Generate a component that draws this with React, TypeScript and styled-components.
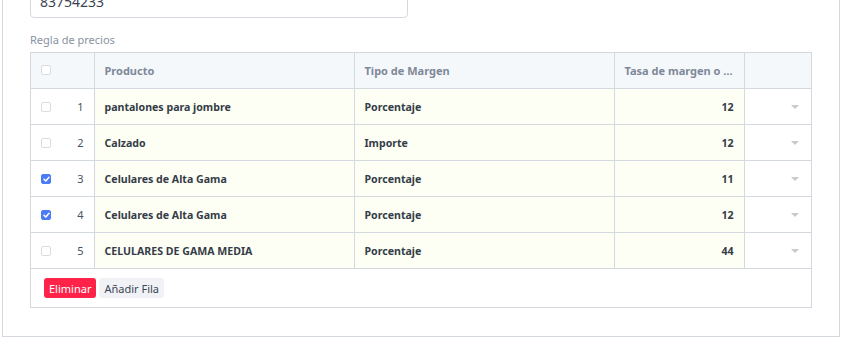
import styled, { createGlobalStyle } from 'styled-components';

const GlobalStyle = createGlobalStyle`
  html, body {
    margin: 0;
    padding: 0;
    background: #ffffff;
    overflow: hidden;
  }
  body {
    font-family: 'Noto Sans', 'Open Sans', sans-serif;
    color: #333d4b;
  }
`;

const colors = {
  border: '#d4d9e0',
  header: '#f5f8fb',
  editable: '#fefff4',
  muted: '#8892a2',
  headText: '#7f8899',
  text: '#343c48',
  danger: '#ff2249',
};

const Panel = styled.div`
  box-sizing: border-box;
  width: 838px;
  height: 353px;
  margin: -16px 0 0 2px;
  padding: 0 27px;
  border: 1px solid ${colors.border};
  border-top: none;
  display: flex;
  flex-direction: column;
`;

const Input = styled.div`
  box-sizing: border-box;
  width: 378px;
  height: 34px;
  border: 1px solid ${colors.border};
  border-radius: 4px;
  padding: 0 9px;
  display: flex;
  align-items: center;
  font-size: 14px;
  color: #3a4250;
`;

const FieldLabel = styled.div`
  margin-top: 15px;
  font-size: 11px;
  color: ${colors.muted};
  line-height: 14px;
`;

const TableBox = styled.div`
  margin-top: 5px;
  width: 780px;
  border: 1px solid ${colors.border};
  border-bottom: none;
`;

const Table = styled.table`
  width: 100%;
  border-collapse: collapse;
  table-layout: fixed;
  font-size: 10.6px;
`;

const Th = styled.th`
  height: 35px;
  padding: 0 10px;
  background: ${colors.header};
  border-right: 1px solid ${colors.border};
  border-bottom: 1px solid ${colors.border};
  text-align: left;
  font-size: 11px;
  font-weight: 700;
  color: ${colors.headText};
  white-space: nowrap;
  overflow: hidden;
  text-overflow: ellipsis;
  &:last-child {
    border-right: none;
  }
`;

const Td = styled.td<{ $edit?: boolean; $right?: boolean }>`
  height: 35px;
  padding: 0 10px;
  background: ${(p) => (p.$edit ? colors.editable : '#ffffff')};
  border-right: 1px solid ${colors.border};
  border-bottom: 1px solid ${colors.border};
  text-align: ${(p) => (p.$right ? 'right' : 'left')};
  font-weight: 700;
  color: ${colors.text};
  white-space: nowrap;
  &:last-child {
    border-right: none;
  }
`;

const IndexCell = styled.div`
  display: flex;
  align-items: center;
  justify-content: space-between;
  font-size: 11px;
  font-weight: 400;
  color: #4a5260;
`;

const Check = styled.span<{ $on?: boolean }>`
  box-sizing: border-box;
  width: 10px;
  height: 10px;
  border-radius: 2px;
  border: 1px solid ${(p) => (p.$on ? '#4a7cf5' : '#d9dde3')};
  background: ${(p) => (p.$on ? '#4a7cf5' : '#ffffff')};
  display: inline-flex;
  align-items: center;
  justify-content: center;
`;

const Caret = styled.div`
  margin-left: auto;
  margin-right: 2px;
  width: 0;
  height: 0;
  border-left: 4px solid transparent;
  border-right: 4px solid transparent;
  border-top: 4px solid #c9c9cc;
`;

const Footer = styled.div`
  box-sizing: border-box;
  height: 39px;
  padding: 0 13px;
  border-bottom: 1px solid ${colors.border};
  display: flex;
  align-items: center;
  gap: 3px;
`;

const Button = styled.button<{ $danger?: boolean }>`
  height: 20px;
  padding: 0 5px;
  border: none;
  border-radius: 3px;
  font-family: inherit;
  font-size: 11px;
  background: ${(p) => (p.$danger ? colors.danger : '#f0f2f5')};
  color: ${(p) => (p.$danger ? '#ffffff' : '#3c4656')};
  cursor: pointer;
`;

const rows = [
  { n: 1, product: 'pantalones para jombre', type: 'Porcentaje', rate: 12, on: false },
  { n: 2, product: 'Calzado', type: 'Importe', rate: 12, on: false },
  { n: 3, product: 'Celulares de Alta Gama', type: 'Porcentaje', rate: 11, on: true },
  { n: 4, product: 'Celulares de Alta Gama', type: 'Porcentaje', rate: 12, on: true },
  { n: 5, product: 'CELULARES DE GAMA MEDIA', type: 'Porcentaje', rate: 44, on: false },
];

const Tick = () => (
  <svg width="7" height="6" viewBox="0 0 7 6">
    <path d="M1 3.2 L2.8 5 L6 1.2" fill="none" stroke="#fff" strokeWidth="1.5" strokeLinecap="round" strokeLinejoin="round" />
  </svg>
);

export default function App() {
  return (
    <>
      <GlobalStyle />
      <Panel>
        <Input>83754233</Input>
        <FieldLabel>Regla de precios</FieldLabel>
        <TableBox>
          <Table>
            <colgroup>
              <col style={{ width: 63 }} />
              <col style={{ width: 260 }} />
              <col style={{ width: 260 }} />
              <col style={{ width: 130 }} />
              <col />
            </colgroup>
            <thead>
              <tr>
                <Th>
                  <Check />
                </Th>
                <Th>Producto</Th>
                <Th>Tipo de Margen</Th>
                <Th>Tasa de margen o importe</Th>
                <Th />
              </tr>
            </thead>
            <tbody>
              {rows.map((r) => (
                <tr key={r.n}>
                  <Td>
                    <IndexCell>
                      <Check $on={r.on}>{r.on && <Tick />}</Check>
                      <span>{r.n}</span>
                    </IndexCell>
                  </Td>
                  <Td $edit>{r.product}</Td>
                  <Td $edit>{r.type}</Td>
                  <Td $edit $right>
                    {r.rate}
                  </Td>
                  <Td>
                    <Caret />
                  </Td>
                </tr>
              ))}
            </tbody>
          </Table>
          <Footer>
            <Button $danger>Eliminar</Button>
            <Button>Añadir Fila</Button>
          </Footer>
        </TableBox>
      </Panel>
    </>
  );
}
